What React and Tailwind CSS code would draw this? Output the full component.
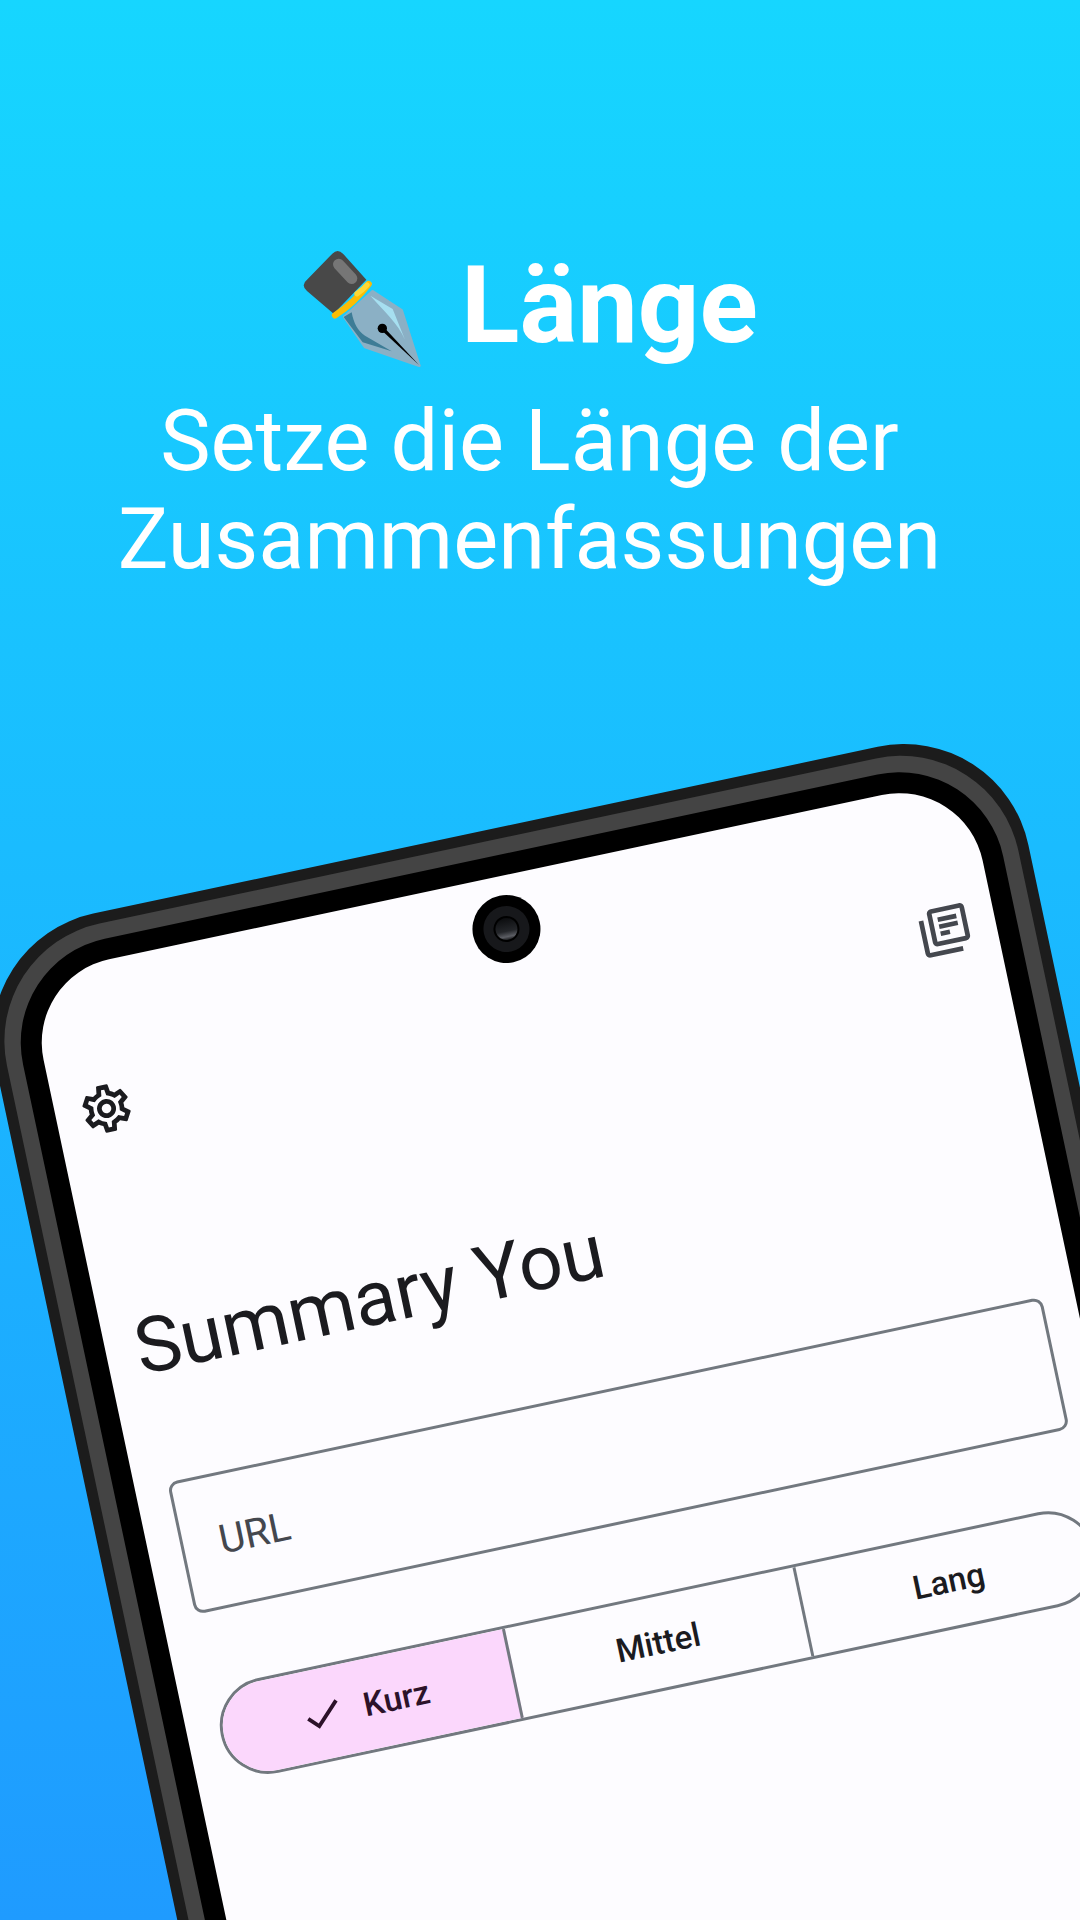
import React from "react";
import { MdOutlineSettings, MdOutlineLibraryBooks, MdCheck } from "react-icons/md";

function Pen() {
  return (
    <svg width="122" height="120" viewBox="70 72 366 360" className="mt-[9px] shrink-0">
      <path d="M200 282 L285 205 L372 262 L425 428 L262 372 Z" fill="#8bb0c5" stroke="#8bb0c5" strokeWidth="8" strokeLinejoin="round" />
      <path d="M198 282 L222 268 C228 300 240 325 262 338 L342 385 L255 358 Z" fill="#3d7c96" />
      <path d="M278 218 L345 258 L382 350 C360 300 320 265 278 218 Z" fill="#a6dff0" />
      <path d="M88 170 L164 92 Q180 76 196 92 L266 170 L168 272 L88 204 Q68 186 88 170 Z" fill="#484848" />
      <path d="M183 124 L222 166" stroke="#767676" strokeWidth="34" strokeLinecap="round" />
      <path d="M172 277 Q230 240 273 183" stroke="#fbbc05" strokeWidth="19" strokeLinecap="round" fill="none" />
      <path d="M238 212 Q256 200 268 186" stroke="#fdd835" strokeWidth="16" strokeLinecap="round" fill="none" />
      <circle cx="314" cy="316" r="14" fill="#000" />
      <path d="M310 320 L318 312 L424 426 Z" fill="#000" />
    </svg>
  );
}

function Camera() {
  return (
    <div className="absolute left-[446px] top-[19px] flex h-[68px] w-[68px] items-center justify-center rounded-full bg-black">
      <div className="flex h-[46px] w-[46px] items-center justify-center rounded-full bg-[#17181b]">
        <div className="h-[26px] w-[26px] rounded-full border-2 border-black bg-[linear-gradient(180deg,#0c0d0f_0%,#24262a_60%,#5c5e64_85%,#1a1b1e_100%)]" />
      </div>
    </div>
  );
}

export default function App() {
  return (
    <div className="relative h-[1920px] w-[1080px] overflow-hidden bg-[linear-gradient(180deg,#16d6ff_0%,#1f9bff_100%)] font-['Roboto',sans-serif]">
      <div className="flex flex-col items-center pr-[21px] pt-[238px] text-white">
        <div className="flex h-[134px] items-start gap-[38px]">
          <Pen />
          <span className="text-[108px] font-bold leading-[134px]">Länge</span>
        </div>
        <div className="mt-[20px] text-center text-[84.8px] leading-[98px]">
          <div>Setze die Länge der</div>
          <div>Zusammenfassungen</div>
        </div>
      </div>

      <div className="absolute left-[-31px] top-[940px] h-[2000px] w-[1056px] origin-top-left rotate-[-12deg] rounded-[127px] bg-[#1c1c1c] p-[11px]">
        <div className="h-full rounded-[120px] bg-[#444444] p-[16px]">
          <div className="h-full rounded-[106px] bg-black p-[21px]">
            <div className="relative h-full rounded-[85px] bg-[#fdfcff]">
              <Camera />
              <div className="flex items-center justify-between px-[23px] pt-[117px] text-[57px]">
                <MdOutlineSettings className="text-[#1b1b1f]" />
                <MdOutlineLibraryBooks className="text-[#44474e]" />
              </div>
              <div className="mt-[164px] pl-[30px] text-[77px] leading-[98px] text-[#1b1b1f]">Summary You</div>
              <div className="mx-[33px] mt-[88px] flex h-[135px] items-center rounded-[10px] border-[3px] border-[#72787f] px-[36px] text-[40px] text-[#44474e]">URL</div>
              <div className="mx-[33px] mt-[75px] flex h-[97px] overflow-hidden rounded-full border-[3px] border-[#72787f] text-[33px] font-medium text-[#1b1b1f]">
                <div className="flex flex-1 items-center justify-center border-r-[3px] border-[#72787f] bg-[#fbd7fc] text-[#2c1229]">
                  <div className="flex items-center gap-[19px] pr-[6px]">
                    <MdCheck className="text-[46px]" />
                    <span>Kurz</span>
                  </div>
                </div>
                <div className="flex flex-1 items-center justify-center border-r-[3px] border-[#72787f]">Mittel</div>
                <div className="flex flex-1 items-center justify-center">Lang</div>
              </div>
            </div>
          </div>
        </div>
      </div>
    </div>
  );
}
